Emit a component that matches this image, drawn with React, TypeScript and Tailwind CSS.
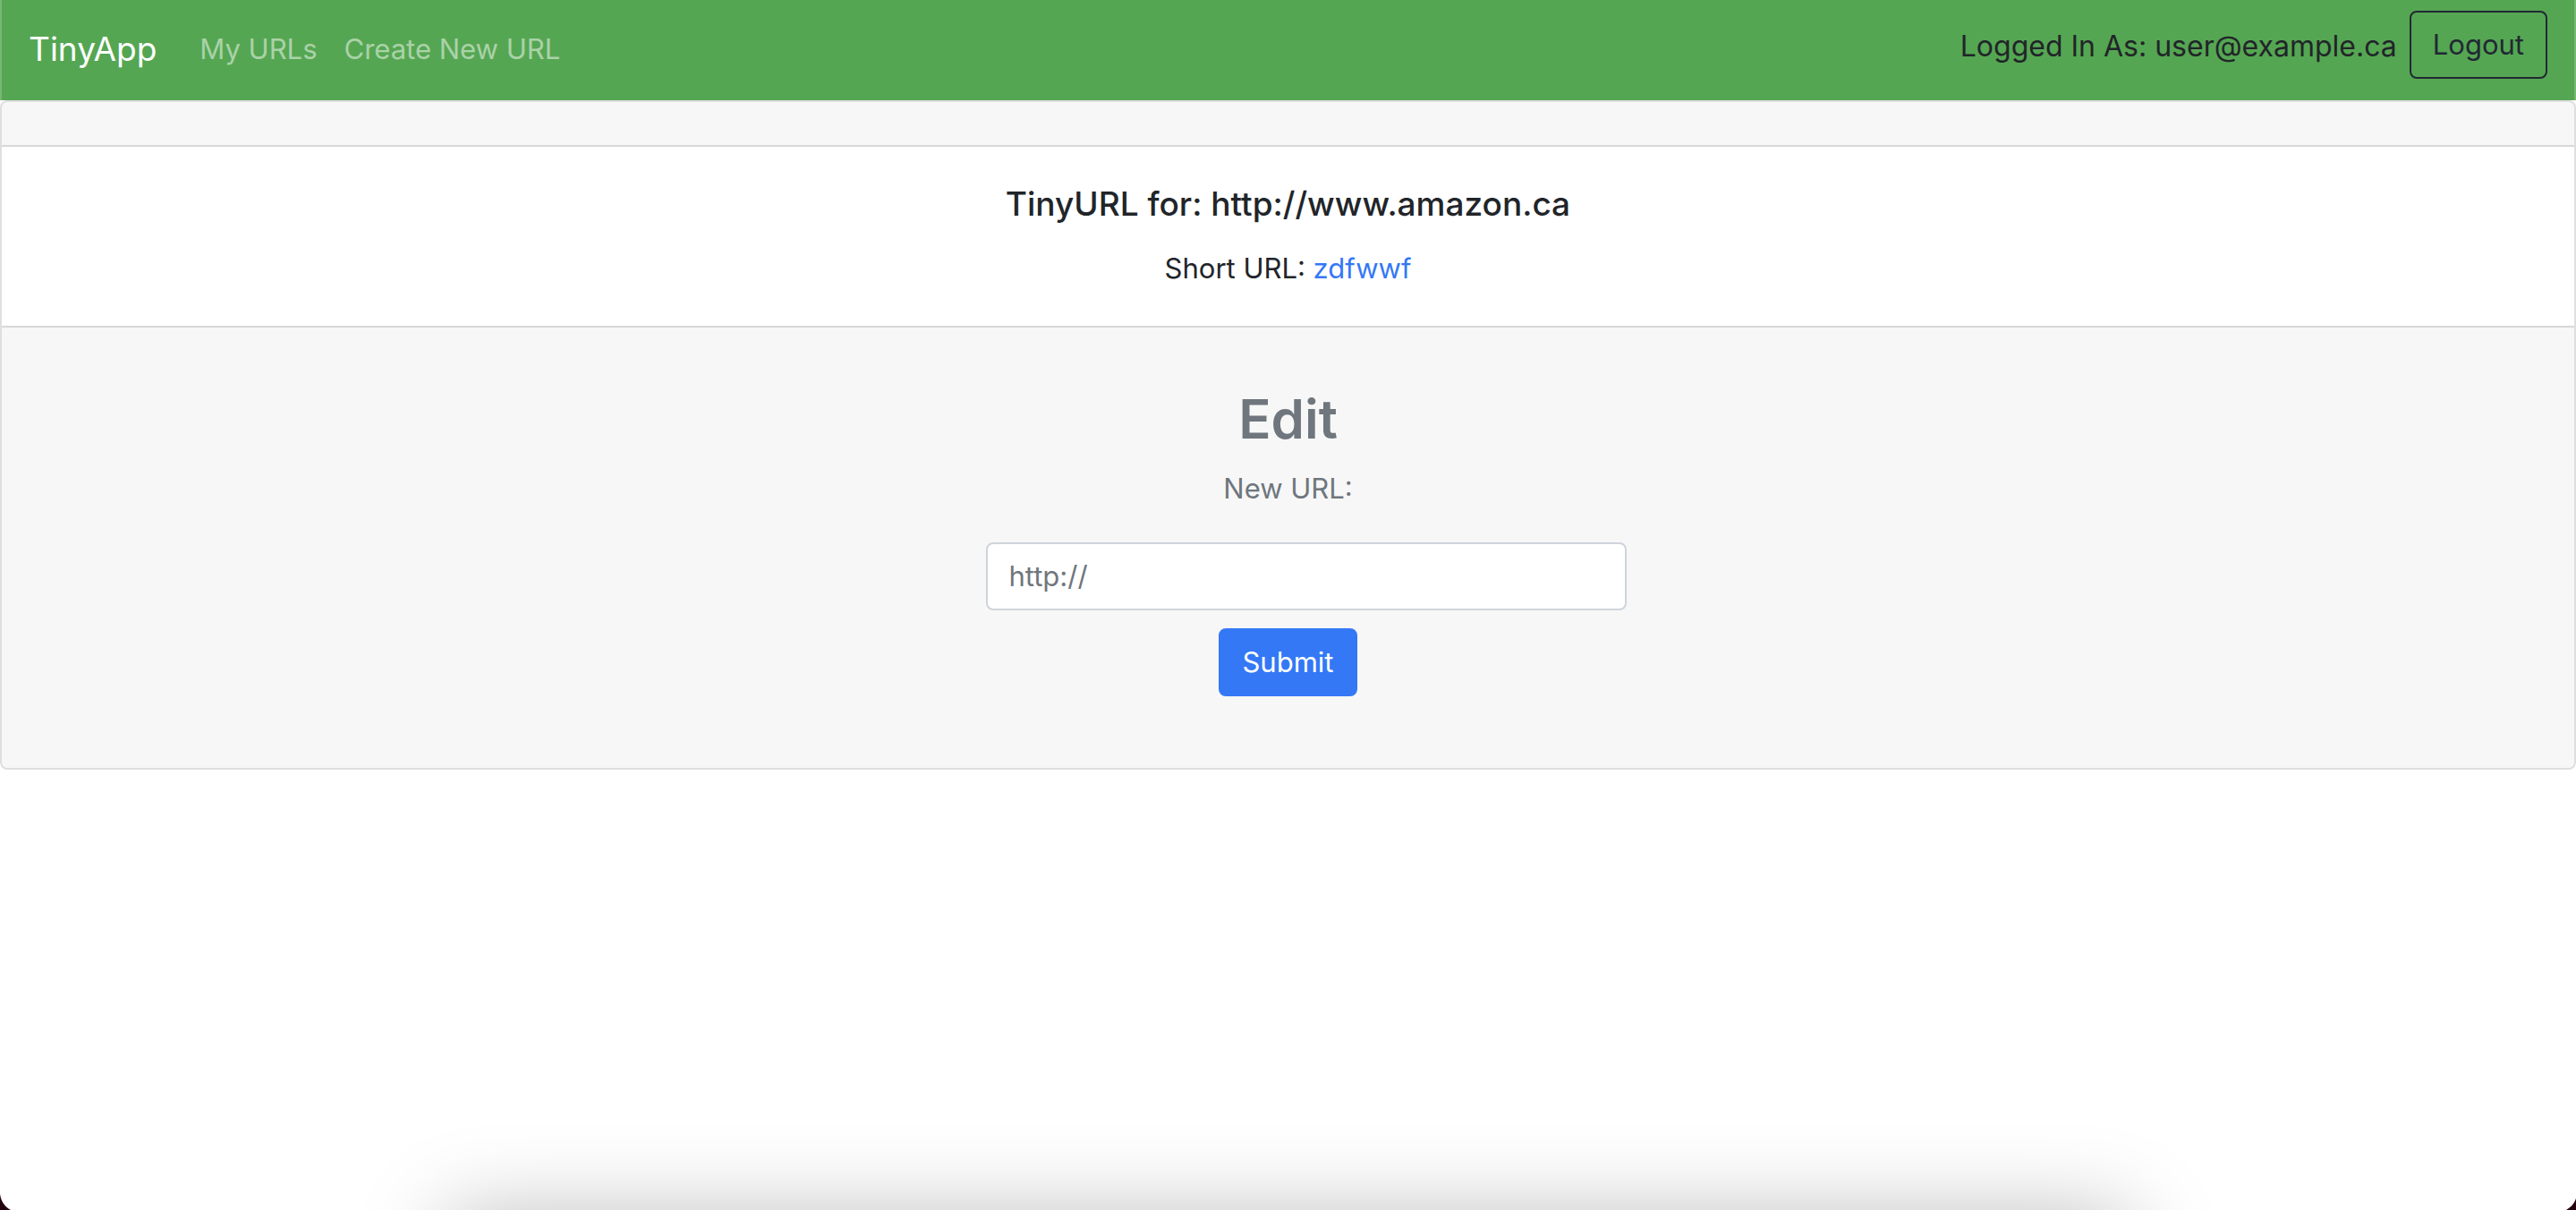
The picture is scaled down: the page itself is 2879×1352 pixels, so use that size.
import React from "react";

function NavBar() {
  return (
    <nav className="flex h-28 items-center border-x-2 border-white/20 bg-[#55a652] px-[30px] pb-0.5">
      <a href="#" className="mr-12 text-[37px] leading-[60px] text-white">
        TinyApp
      </a>
      <ul className="flex gap-[30px] text-[31px] leading-[48px] text-white/50">
        <li>
          <a href="#">My URLs</a>
        </li>
        <li>
          <a href="#">Create New URL</a>
        </li>
      </ul>
      <form className="mb-2.5 ml-auto flex items-center gap-3.5" onSubmit={(e) => e.preventDefault()}>
        <span className="pt-1 text-[32px] leading-[48px]">Logged In As: user@example.ca</span>
        <button
          type="submit"
          className="rounded-lg border-2 border-[#212934] px-6 py-3 text-[31px] leading-[48px] text-[#212934]"
        >
          Logout
        </button>
      </form>
    </nav>
  );
}

function UrlCard() {
  return (
    <main className="rounded-lg border-2 border-[#dfdfdf] bg-[#f7f7f7] text-center text-[31px] leading-[48px]">
      <div className="h-[50px] border-b-2 border-[#d8d8d8]" />
      <section className="border-b-2 border-[#d8d8d8] bg-white px-10 py-10">
        <h5 className="mb-6 text-[37px] leading-[48px] font-medium">TinyURL for: http://www.amazon.ca</h5>
        <p>
          Short URL:{" "}
          <a href="#" className="text-[#3478f6]">
            zdfwwf
          </a>
        </p>
      </section>
      <form
        className="flex flex-col items-center px-10 pt-16 pb-20 text-[#6f767d]"
        onSubmit={(e) => e.preventDefault()}
      >
        <h1 className="mb-4 text-[60px] leading-[76px] font-semibold">Edit</h1>
        <label htmlFor="new-url">New URL:</label>
        <input
          id="new-url"
          type="text"
          placeholder="http://"
          className="mt-9 mb-5 ml-10 w-[716px] max-w-full rounded-lg border-2 border-[#ced4da] bg-white px-6 py-3 text-[#495057] placeholder:text-[#6f767d] placeholder:opacity-100"
        />
        <button type="submit" className="rounded-lg border-2 border-[#3478f6] bg-[#3478f6] px-6 py-3 text-white">
          Submit
        </button>
      </form>
    </main>
  );
}

function WindowEdge() {
  return (
    <div aria-hidden="true" className="pointer-events-none fixed inset-x-0 bottom-0 h-32 overflow-hidden">
      <div className="absolute inset-x-[500px] top-full mt-2 h-40 shadow-[0_0_100px_rgba(0,0,0,0.28)]" />
      <svg className="absolute bottom-0 left-0 h-[18px] w-[12px]" viewBox="0 0 12 18">
        <path d="M0 0C1 8 5 14 12 18H0Z" fill="#26040e" />
      </svg>
      <svg className="absolute right-0 bottom-0 h-[13px] w-[11px]" viewBox="0 0 11 13">
        <path d="M11 0C9 6 5 10 0 13H11Z" fill="#26040e" />
      </svg>
    </div>
  );
}

export default function App() {
  return (
    <div className="min-h-screen bg-white font-['Inter',sans-serif] text-[#212529]">
      <NavBar />
      <UrlCard />
      <WindowEdge />
    </div>
  );
}
